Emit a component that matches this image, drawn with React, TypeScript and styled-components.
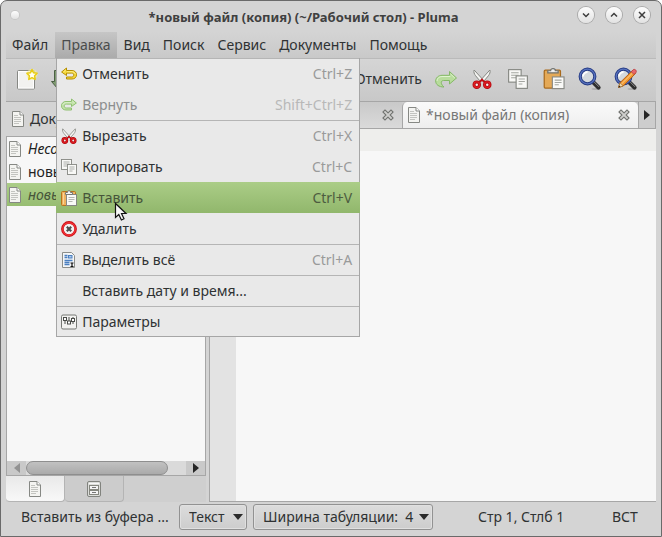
import React from "react";
import styled, { createGlobalStyle, css } from "styled-components";

const line = "#a6a6a6";

const GlobalStyle = createGlobalStyle`
  *, *::before, *::after { box-sizing: border-box; }
  html, body, #root { height: 100%; }
  body {
    margin: 0;
    background: #ffffff;
    color: #2f3233;
    font: 14px/20px "Noto Sans", sans-serif;
    overflow: hidden;
  }
  button, select {
    font: inherit;
    color: inherit;
    border: 0;
    margin: 0;
    padding: 0;
    background: none;
  }
  svg { display: block; flex: none; }
`;

const Window = styled.div`
  display: flex;
  flex-direction: column;
  min-height: 100vh;
  padding: 0 5px;
  border: 1px solid #6a6a6a;
  border-radius: 7px 7px 0 0;
  background: #d4d4d4;
`;

const TitleBar = styled.header`
  display: flex;
  align-items: center;
  height: 31px;
  padding: 0 6px 4px 5px;
`;

const Title = styled.h1`
  flex: 1;
  margin: 0;
  padding: 4px 0 0 10px;
  font-size: 13px;
  line-height: 20px;
  font-weight: 700;
  text-align: center;
  white-space: nowrap;
  color: #3f4040;
`;

const WindowButtons = styled.div`
  display: flex;
  gap: 12px;
`;

const RoundButton = styled.button<{ $small?: boolean }>`
  display: grid;
  place-items: center;
  width: ${(p) => (p.$small ? 8 : 16)}px;
  height: ${(p) => (p.$small ? 8 : 16)}px;
  border-radius: 50%;
  background: linear-gradient(#fdfdfd, #e2e2e2);
  box-shadow: 0 0 0 1px ${(p) => (p.$small ? "#c6c6c6" : "#a9a9a9")};
`;

const MenuBar = styled.nav`
  display: flex;
  gap: 1px;
  height: 27px;
  background: linear-gradient(#d4d4d4, #c9c9c9);
  border-bottom: 1px solid #bababa;
`;

const MenuSlot = styled.div`
  position: relative;
  display: flex;
`;

const MenuTitle = styled.button<{ $open?: boolean }>`
  padding: 0 6px;
  white-space: nowrap;
  ${(p) =>
    p.$open &&
    css`
      color: #4a4c4c;
      background: linear-gradient(#c6c6c6, #ababab);
    `}
`;

const Menu = styled.div`
  position: absolute;
  z-index: 2;
  top: 26px;
  left: 1px;
  width: 304px;
  background: #e9e9e9;
  border: 1px solid ${line};
  border-top: 0;
`;

const MenuRow = styled.button<{ $line?: boolean; $active?: boolean }>`
  display: grid;
  grid-template-columns: 16px 1fr auto;
  column-gap: 5px;
  align-items: center;
  width: 100%;
  height: 31px;
  padding: 0 7px 0 4px;
  text-align: left;
  white-space: nowrap;
  border-top: 1px solid ${(p) => (p.$line ? "#b5b5b5" : "transparent")};
  &:disabled { color: #8c8e8e; }
  &:last-child { height: 30px; }
  ${(p) =>
    p.$active &&
    css`
      width: calc(100% + 2px);
      margin: 0 -1px;
      padding: 0 8px 0 5px;
      border-top: 0;
      color: #46543a;
      background: linear-gradient(#abcd87, #91b76c);
    `}
`;

const Shortcut = styled.kbd<{ $tone: string }>`
  font: inherit;
  color: ${(p) => p.$tone};
`;

const ToolBar = styled.div`
  display: flex;
  height: 43px;
  padding: 0 12px 2px 3px;
  background: linear-gradient(#d5d5d5, #c8c8c8);
  border-bottom: 1px solid ${line};
`;

const ToolGroup = styled.div<{ $end?: boolean }>`
  display: flex;
  align-items: center;
  margin-left: ${(p) => (p.$end ? "auto" : "0")};
`;

const Tool = styled.button`
  display: flex;
  align-items: center;
  justify-content: center;
  gap: 5px;
  min-width: 36px;
  height: 36px;
  padding: 0 6px;
  white-space: nowrap;
`;

const Body = styled.main`
  flex: 1;
  display: grid;
  grid-template-columns: 200px 1fr;
  column-gap: 3px;
`;

const Side = styled.aside`
  display: flex;
  flex-direction: column;
  min-width: 0;
`;

const SideHeader = styled.div`
  display: flex;
  align-items: center;
  gap: 5px;
  height: 34px;
  padding: 0 5px;
`;

const FileList = styled.ul`
  flex: 1;
  margin: 0;
  padding: 0;
  list-style: none;
  overflow: hidden;
  background: #f7f7f7;
  border: 1px solid ${line};
  border-bottom: 0;
`;

const FileRow = styled.button<{ $active?: boolean; $italic?: boolean }>`
  display: flex;
  align-items: center;
  gap: 6px;
  width: 100%;
  height: 23px;
  padding: 0 1px;
  white-space: nowrap;
  font-style: ${(p) => (p.$italic ? "italic" : "normal")};
  color: ${(p) => (p.$active ? "#46543a" : "#222222")};
  background: ${(p) => (p.$active ? "linear-gradient(#abcd87, #97bd72)" : "none")};
`;

const ScrollBar = styled.div`
  display: grid;
  grid-template-columns: 19px 1fr 19px;
  align-items: center;
  height: 15px;
  background: #c9c9c9;
  border: 1px solid ${line};
  border-top: 0;
`;

const ScrollTrack = styled.div`
  height: 14px;
  background: #dadada;
`;

const ScrollThumb = styled.div`
  width: 89%;
  height: 14px;
  border: 1px solid #8e8e8e;
  border-radius: 7px;
  background: linear-gradient(#c1c1c1, #aaaaaa);
`;

const ArrowButton = styled.button`
  display: grid;
  place-items: center;
  height: 100%;
`;

const SideTabs = styled.div`
  display: flex;
  height: 26px;
  background: #cfcfcf;
`;

const SideTab = styled.button<{ $active?: boolean }>`
  display: grid;
  place-items: center;
  width: 59px;
  border: 1px solid #b4b4b4;
  border-top: 0;
  border-left: 0;
  border-radius: 0 0 4px 4px;
  background: ${(p) => (p.$active ? "linear-gradient(#e9e9e9, #f8f8f8)" : "#cccccc")};
`;

const Editor = styled.section`
  display: flex;
  flex-direction: column;
  min-width: 0;
  border-left: 1px solid ${line};
  border-bottom: 1px solid ${line};
`;

const Tabs = styled.div`
  display: grid;
  grid-template-columns: 192px 1fr 18px;
  height: 27px;
  background: #cdcdcd;
  border-bottom: 1px solid ${line};
`;

const Tab = styled.div<{ $active?: boolean }>`
  display: flex;
  align-items: center;
  justify-content: space-between;
  padding: 0 8px 0 4px;
  color: #777777;
  border-left: 1px solid ${line};
  border-radius: ${(p) => (p.$active ? "5px 5px 0 0" : "0")};
  background: ${(p) => (p.$active ? "linear-gradient(#fafafa, #eeeeee)" : "linear-gradient(#c9c9c9, #dadada)")};
`;

const TabButton = styled.button`
  display: flex;
  align-items: center;
  gap: 5px;
  white-space: nowrap;
`;

const TabScroll = styled.button`
  display: grid;
  place-items: center;
  border: 1px solid ${line};
  border-top: 0;
  border-bottom: 0;
`;

const CurrentLine = styled.div`
  height: 22px;
  background: #eeeeec;
`;

const Page = styled.div`
  flex: 1;
  display: grid;
  grid-template-columns: 26px 1fr;
  background: #f7f7f7;
`;

const Gutter = styled.div`
  background: #e3e3e3;
`;

const TextArea = styled.textarea`
  width: 100%;
  height: 100%;
  padding: 0 4px;
  border: 0;
  outline: 0;
  resize: none;
  background: transparent;
`;

const StatusBar = styled.footer`
  display: flex;
  align-items: center;
  height: 34px;
  padding: 0 15px 4px;
`;

const StatusText = styled.span<{ $width: number; $push?: boolean }>`
  width: ${(p) => p.$width}px;
  margin-left: ${(p) => (p.$push ? "auto" : "0")};
  white-space: nowrap;
`;

const Combo = styled.label<{ $width: number }>`
  position: relative;
  display: block;
  width: ${(p) => p.$width}px;
  height: 26px;
  margin-right: 6px;
`;

const Select = styled.select`
  appearance: none;
  width: 100%;
  height: 26px;
  padding: 0 9px;
  border: 1px solid #929292;
  border-radius: 3px;
  background: linear-gradient(#dcdcdc, #cdcdcd);
  box-shadow: inset 0 0 0 1px #e0e0e0;
`;

const Caret = styled.svg`
  position: absolute;
  top: 10px;
  right: 4px;
  pointer-events: none;
`;

const CursorMark = styled.svg`
  position: absolute;
  z-index: 3;
  top: 170px;
  left: 59px;
  pointer-events: none;
`;

const DocIcon = () => (
  <svg width="14" height="16" viewBox="0 0 14 16">
    <path d="M1.5.5h7.500l3.500 3.500v11.500h-11z" fill="#f4f4f1" stroke="#868884" />
    <path d="M9 .5v3.500h3.500" fill="#fff" stroke="#868884" />
    <path d="M3 4.500h4M3 6.500h7M3 8.500h7M3 10.500h7M3 12.500h5" stroke="#c3c4c0" />
  </svg>
);

const CabinetIcon = () => (
  <svg width="14" height="16" viewBox="0 0 14 16">
    <rect x=".5" y=".5" width="13" height="15" rx="1.500" fill="#dcddda" stroke="#81837e" />
    <path d="M2 2.500h10" stroke="#f8f8f8" />
    <rect x="2.500" y="4.500" width="9" height="4" fill="#f4f4f4" stroke="#85877f" />
    <rect x="2.500" y="9.500" width="9" height="4" fill="#f4f4f4" stroke="#85877f" />
    <path d="M5 6.500h4M5 11.500h4" stroke="#777" />
  </svg>
);

const NewIcon = () => (
  <svg width="22" height="22" viewBox="0 0 22 22">
    <rect x="1.500" y="2.500" width="17" height="18.500" rx="1" fill="#f2f2f0" stroke="#868884" />
    <rect x="2.500" y="3.500" width="15" height="16.500" fill="none" stroke="#fff" />
    <circle cx="16" cy="6.500" r="5.500" fill="#fbf39a" opacity=".6" />
    <path d="M16 1.500l1.600 3.300 3.500.5-2.500 2.500.6 3.600-3.200-1.700-3.200 1.700.6-3.600-2.500-2.500 3.500-.5z" fill="#fffef0" stroke="#e8cc12" strokeWidth="1.500" strokeLinejoin="round" />
  </svg>
);

const OpenIcon = () => (
  <svg width="24" height="22" viewBox="0 0 24 22">
    <path d="M5.500 3.500h6l1 2h10v14h-17z" fill="#d5d6d2" stroke="#666" />
    <path d="M3.500 2.500v11h-3l6 7 6-7h-3v-11z" fill="#7f9b72" stroke="#4b5f44" />
  </svg>
);

const ArrowIcon = ({ redo }: { redo?: boolean }) => (
  <svg width="16" height="16" viewBox="0 0 16 16">
    <g transform={redo ? "translate(16 1) scale(-1 1)" : "translate(0 1)"} strokeLinejoin="round">
      <path
        d="M5.500 1v2.500h5.500c2.600 0 4.500 1.800 4.500 4.300s-1.900 4.200-4.500 4.200H5.500v-2h5.200c1.300 0 2.100-.8 2.100-2s-.8-1.900-2.100-1.900H5.500v2.400L.6 5z"
        fill={redo ? "#c4e3ab" : "#f7da3c"}
        stroke={redo ? "#8fc071" : "#b58e00"}
      />
      <path d="M2.500 5l2.200-2M6 4.700h5c1.600 0 2.900.9 3.300 2.400" fill="none" stroke={redo ? "#e0f2d2" : "#fff5a0"} strokeWidth=".8" />
    </g>
  </svg>
);

const BigArrowIcon = ({ redo }: { redo?: boolean }) => (
  <svg width="22" height="22" viewBox="0 0 22 22">
    <g transform={redo ? "translate(0 2)" : "translate(22 2) scale(-1 1)"} strokeLinejoin="round">
      <path
        d="M14.500 1.500L21.500 8l-7 6v-3.500H8.500c-2.800 0-3.300 3.500.5 6.500C3.700 17 .7 14.500.7 11c0-3.300 2.800-5.700 6.300-5.700h7.500z"
        fill={redo ? "#b8dc9c" : "#f7d630"}
        stroke={redo ? "#84b866" : "#b08a00"}
      />
      <path d="M15.600 4l4.200 4M2 11c0-2.700 2.200-4.500 5-4.500h8.300" fill="none" stroke={redo ? "#e0f3d0" : "#fff5a0"} />
    </g>
  </svg>
);

const CutIcon = ({ size }: { size: number }) => (
  <svg width={size} height={size} viewBox="0 0 16 16">
    <path d="M1.700.8c-.5 1.700.1 3.200 1.200 4.600l4 4.800 1.800-1.700z" fill="#f5f5f3" stroke="#858782" strokeWidth=".8" />
    <path d="M14.300.8c.5 1.700-.1 3.200-1.200 4.600l-4 4.800-1.800-1.700z" fill="#f5f5f3" stroke="#858782" strokeWidth=".8" />
    <path d="M6 10.500l2-2 2 2" fill="none" stroke="#c40a10" strokeWidth="1.500" />
    <circle cx="3.800" cy="12.500" r="2.200" fill="#eee" stroke="#b0090e" strokeWidth="2.400" />
    <circle cx="12.200" cy="12.500" r="2.200" fill="#eee" stroke="#b0090e" strokeWidth="2.400" />
    <circle cx="3.800" cy="12.500" r="2.200" fill="none" stroke="#e01c22" strokeWidth="1.100" />
    <circle cx="12.200" cy="12.500" r="2.200" fill="none" stroke="#e01c22" strokeWidth="1.100" />
  </svg>
);

const CopyIcon = ({ size }: { size: number }) => (
  <svg width={size} height={size} viewBox="0 0 16 16">
    <rect x=".5" y=".5" width="10" height="10" fill="#f8f8f6" stroke="#858782" strokeWidth=".9" />
    <path d="M2.500 3h6M2.500 5h6M2.500 7h4" stroke="#a4a6a1" strokeWidth=".9" />
    <rect x="6.500" y="5.500" width="9" height="10" fill="#f8f8f6" stroke="#858782" strokeWidth=".9" />
    <path d="M8.500 8h5M8.500 10h5M8.500 12h3" stroke="#a4a6a1" strokeWidth=".9" />
  </svg>
);

const PasteIcon = () => (
  <svg width="22" height="22" viewBox="0 0 16 16">
    <rect x=".9" y="1.600" width="11.800" height="13" rx=".8" fill="#e4a957" stroke="#a96a1c" strokeWidth=".9" />
    <path d="M3.500 3.500v-1.500h2c0-2 3.500-2 3.500 0h2v1.500z" fill="#eee" stroke="#6f716d" strokeWidth=".9" />
    <rect x="6.800" y="6.500" width="8.500" height="8.500" fill="#f9f9f7" stroke="#858782" strokeWidth=".8" />
    <path d="M8.500 8.800h5M8.500 10.500h5M8.500 12.200h3" stroke="#a4a6a1" strokeWidth=".8" />
  </svg>
);

const MenuPasteIcon = () => (
  <svg width="16" height="16" viewBox="0 0 16 16">
    <rect x=".5" y="1.500" width="14" height="14" rx="1" fill="#f0b25e" stroke="#b8731c" />
    <path d="M2.500 3v11" stroke="#f9d49a" />
    <rect x="5.500" y="4.500" width="10" height="11" fill="#f9f9f7" stroke="#858782" />
    <path d="M4.500 4.500v-2h2c0-2.500 3-2.500 3 0h2v2z" fill="#f4f4f4" stroke="#777975" />
    <path d="M7.500 7.500h6M7.500 9.500h6M7.500 11.500h4" stroke="#b4b6b1" />
  </svg>
);

const FindIcon = ({ pencil }: { pencil?: boolean }) => (
  <svg width="24" height="24" viewBox="0 0 24 24">
    <ellipse cx="18" cy="22" rx="4.500" ry="1" fill="#000" opacity=".14" />
    <path d="M14.500 14.500l6 6" stroke="#2f2f2f" strokeWidth="4.200" strokeLinecap="round" />
    <path d="M16 14.800l4.800 4.800" stroke="#8b8b8b" strokeWidth="1" strokeLinecap="round" />
    <circle cx="9.500" cy="9.500" r="7.300" fill="#d5dade" stroke="#263b84" strokeWidth="3.200" />
    <circle cx="9.500" cy="9.500" r="7.300" fill="none" stroke="#5873bf" strokeWidth="1.300" />
    <path d="M5 9.500a4.500 4.500 0 0 1 4.500-4.500" fill="none" stroke="#fff" strokeWidth="1.800" />
    {pencil && (
      <g strokeLinejoin="round">
        <path d="M4.500 20.500l1.500-4.800L18.500 3.500l3 3L9.200 19z" fill="#f19a35" stroke="#b85e10" />
        <path d="M7.500 17L19.500 5" stroke="#ffd08a" />
        <path d="M17.200 4.700l2-2c1.500-1.200 4 1 2.800 2.800l-2 2z" fill="#e8666a" stroke="#b43a3d" strokeWidth=".8" />
        <path d="M4.500 20.500l1.500-4.800 3.200 3.300z" fill="#f5d9a8" stroke="#8c6733" strokeWidth=".6" />
        <path d="M4.500 20.500l.7-2 1.300 1.300z" fill="#222" />
      </g>
    )}
  </svg>
);

const DeleteIcon = () => (
  <svg width="16" height="16" viewBox="0 0 16 16">
    <circle cx="8" cy="8" r="6.600" fill="#f2f2f2" stroke="#c90d12" strokeWidth="2.600" />
    <circle cx="8" cy="8" r="6.300" fill="none" stroke="#f03338" strokeWidth="1.400" />
    <path d="M5.800 5.800l4.400 4.400M10.200 5.800l-4.400 4.400" stroke="#4c4e4c" strokeWidth="2.200" />
  </svg>
);

const SelectAllIcon = () => (
  <svg width="16" height="16" viewBox="0 0 16 16">
    <path d="M1.500.5h9l3 3v12h-12z" fill="#f4f6f8" stroke="#8c8e8a" />
    <path d="M3.500 3.500h3M3.500 5.500h3M3.500 8.500h8M3.500 10.500h5M3.500 12.500h5" stroke="#4a7fc0" strokeWidth="1.300" />
    <rect x="7.500" y="3.500" width="3.500" height="2.500" fill="#a9c7ea" stroke="#4a7fc0" />
    <path d="M9.500 11h3M9.500 14.500h3M11 11v3.500" stroke="#111" strokeWidth="1.200" />
  </svg>
);

const SettingsIcon = () => (
  <svg width="16" height="16" viewBox="0 0 16 16">
    <rect x=".5" y="1" width="15" height="14" rx="1.500" fill="#f3f3f1" stroke="#777975" />
    <path d="M4 3v7M8 3v7M12 3v7" stroke="#4a4c49" />
    <rect x="2.500" y="3.500" width="3" height="3" fill="#fff" stroke="#4a4c49" />
    <rect x="6.500" y="7" width="3" height="3" fill="#fff" stroke="#4a4c49" />
    <rect x="10.500" y="4.500" width="3" height="3" fill="#fff" stroke="#4a4c49" />
  </svg>
);

const TabCloseIcon = () => (
  <svg width="12" height="12" viewBox="0 0 12 12">
    <path d="M3 3l6 6M9 3l-6 6" stroke="#70726e" strokeWidth="4" strokeLinecap="square" />
    <path d="M3 3l6 6M9 3l-6 6" stroke="#cfcfcd" strokeWidth="1.800" strokeLinecap="square" />
  </svg>
);

const Triangle = ({ left, muted }: { left?: boolean; muted?: boolean }) => (
  <svg width="6" height="10" viewBox="0 0 6 10">
    <path d={left ? "M6 0v10L0 5z" : "M0 0v10l6-5z"} fill={muted ? "#929292" : "#252525"} />
  </svg>
);

const Glyph = ({ d }: { d: string }) => (
  <svg width="10" height="10" viewBox="0 0 10 10">
    <path d={d} fill="none" stroke="#3d3d3d" strokeWidth="1.500" />
  </svg>
);

const editItems: {
  label: string;
  keys?: string;
  icon?: React.ReactNode;
  disabled?: boolean;
  line?: boolean;
  active?: boolean;
}[] = [
  { label: "Отменить", keys: "Ctrl+Z", icon: <ArrowIcon />, line: true },
  { label: "Вернуть", keys: "Shift+Ctrl+Z", icon: <ArrowIcon redo />, disabled: true },
  { label: "Вырезать", keys: "Ctrl+X", icon: <CutIcon size={16} />, line: true },
  { label: "Копировать", keys: "Ctrl+C", icon: <CopyIcon size={16} /> },
  { label: "Вставить", keys: "Ctrl+V", icon: <MenuPasteIcon />, active: true },
  { label: "Удалить", icon: <DeleteIcon /> },
  { label: "Выделить всё", keys: "Ctrl+A", icon: <SelectAllIcon />, line: true },
  { label: "Вставить дату и время...", line: true },
  { label: "Параметры", icon: <SettingsIcon />, line: true },
];

const EditMenu = () => (
  <Menu role="menu">
    {editItems.map((item) => (
      <MenuRow key={item.label} role="menuitem" disabled={item.disabled} $line={item.line} $active={item.active}>
        {item.icon ?? <span />}
        <span>{item.label}</span>
        {item.keys && (
          <Shortcut $tone={item.active ? "#4d5c40" : item.disabled ? "#b8b8b8" : "#999a9a"}>{item.keys}</Shortcut>
        )}
      </MenuRow>
    ))}
  </Menu>
);

const menus = ["Файл", "Правка", "Вид", "Поиск", "Сервис", "Документы", "Помощь"];

const files = [
  { name: "Несохранённый документ", italic: true },
  { name: "новый файл" },
  { name: "новый файл (копия)", italic: true, active: true },
];

export default function App() {
  return (
    <>
      <GlobalStyle />
      <Window>
        <TitleBar>
          <RoundButton $small aria-label="Меню окна" />
          <Title>*новый файл (копия) (~/Рабочий стол) - Pluma</Title>
          <WindowButtons>
            <RoundButton aria-label="Свернуть"><Glyph d="M2 3.500l3 3 3-3" /></RoundButton>
            <RoundButton aria-label="Развернуть"><Glyph d="M2 6.500l3-3 3 3" /></RoundButton>
            <RoundButton aria-label="Закрыть"><Glyph d="M2 2l6 6M8 2l-6 6" /></RoundButton>
          </WindowButtons>
        </TitleBar>

        <MenuBar>
          {menus.map((name) => (
            <MenuSlot key={name}>
              <MenuTitle $open={name === "Правка"}>{name}</MenuTitle>
              {name === "Правка" && (
                <>
                  <EditMenu />
                  <CursorMark width="14" height="20" viewBox="0 0 14 20">
                    <path d="M1.500 1.500v14l3.300-3 2.600 5.500 2.600-1.200-2.500-5.300h4.500z" fill="#f8f8f8" stroke="#111" strokeWidth="1.200" />
                  </CursorMark>
                </>
              )}
            </MenuSlot>
          ))}
        </MenuBar>

        <ToolBar>
          <ToolGroup>
            <Tool aria-label="Создать"><NewIcon /></Tool>
            <Tool aria-label="Открыть"><OpenIcon /></Tool>
          </ToolGroup>
          <ToolGroup $end>
            <Tool><BigArrowIcon />Отменить</Tool>
            <Tool aria-label="Вернуть"><BigArrowIcon redo /></Tool>
            <Tool aria-label="Вырезать"><CutIcon size={20} /></Tool>
            <Tool aria-label="Копировать"><CopyIcon size={20} /></Tool>
            <Tool aria-label="Вставить"><PasteIcon /></Tool>
            <Tool aria-label="Найти"><FindIcon /></Tool>
            <Tool aria-label="Заменить"><FindIcon pencil /></Tool>
          </ToolGroup>
        </ToolBar>

        <Body>
          <Side>
            <SideHeader><DocIcon />Документы</SideHeader>
            <FileList>
              {files.map((file) => (
                <li key={file.name}>
                  <FileRow $italic={file.italic} $active={file.active}><DocIcon />{file.name}</FileRow>
                </li>
              ))}
            </FileList>
            <ScrollBar>
              <ArrowButton aria-label="Влево"><Triangle left muted /></ArrowButton>
              <ScrollTrack><ScrollThumb /></ScrollTrack>
              <ArrowButton aria-label="Вправо"><Triangle /></ArrowButton>
            </ScrollBar>
            <SideTabs>
              <SideTab $active aria-label="Документы"><DocIcon /></SideTab>
              <SideTab aria-label="Обзор файлов"><CabinetIcon /></SideTab>
            </SideTabs>
          </Side>

          <Editor>
            <Tabs>
              <Tab>
                <TabButton><DocIcon />новый файл</TabButton>
                <button aria-label="Закрыть вкладку"><TabCloseIcon /></button>
              </Tab>
              <Tab $active>
                <TabButton><DocIcon />*новый файл (копия)</TabButton>
                <button aria-label="Закрыть вкладку"><TabCloseIcon /></button>
              </Tab>
              <TabScroll aria-label="Следующие вкладки"><Triangle /></TabScroll>
            </Tabs>
            <CurrentLine />
            <Page>
              <Gutter />
              <TextArea aria-label="Текст документа" />
            </Page>
          </Editor>
        </Body>

        <StatusBar>
          <StatusText $width={158}>Вставить из буфера ...</StatusText>
          <Combo $width={68}>
            <Select aria-label="Режим подсветки"><option>Текст</option></Select>
            <Caret width="10" height="6" viewBox="0 0 10 6"><path d="M0 0h10L5 6z" fill="#2b2b2b" /></Caret>
          </Combo>
          <Combo $width={180}>
            <Select aria-label="Ширина табуляции"><option>{"Ширина табуляции:\u00a0 4"}</option></Select>
            <Caret width="10" height="6" viewBox="0 0 10 6"><path d="M0 0h10L5 6z" fill="#2b2b2b" /></Caret>
          </Combo>
          <StatusText $width={134} $push>Стр 1, Стлб 1</StatusText>
          <StatusText $width={29}>ВСТ</StatusText>
        </StatusBar>
      </Window>
    </>
  );
}
